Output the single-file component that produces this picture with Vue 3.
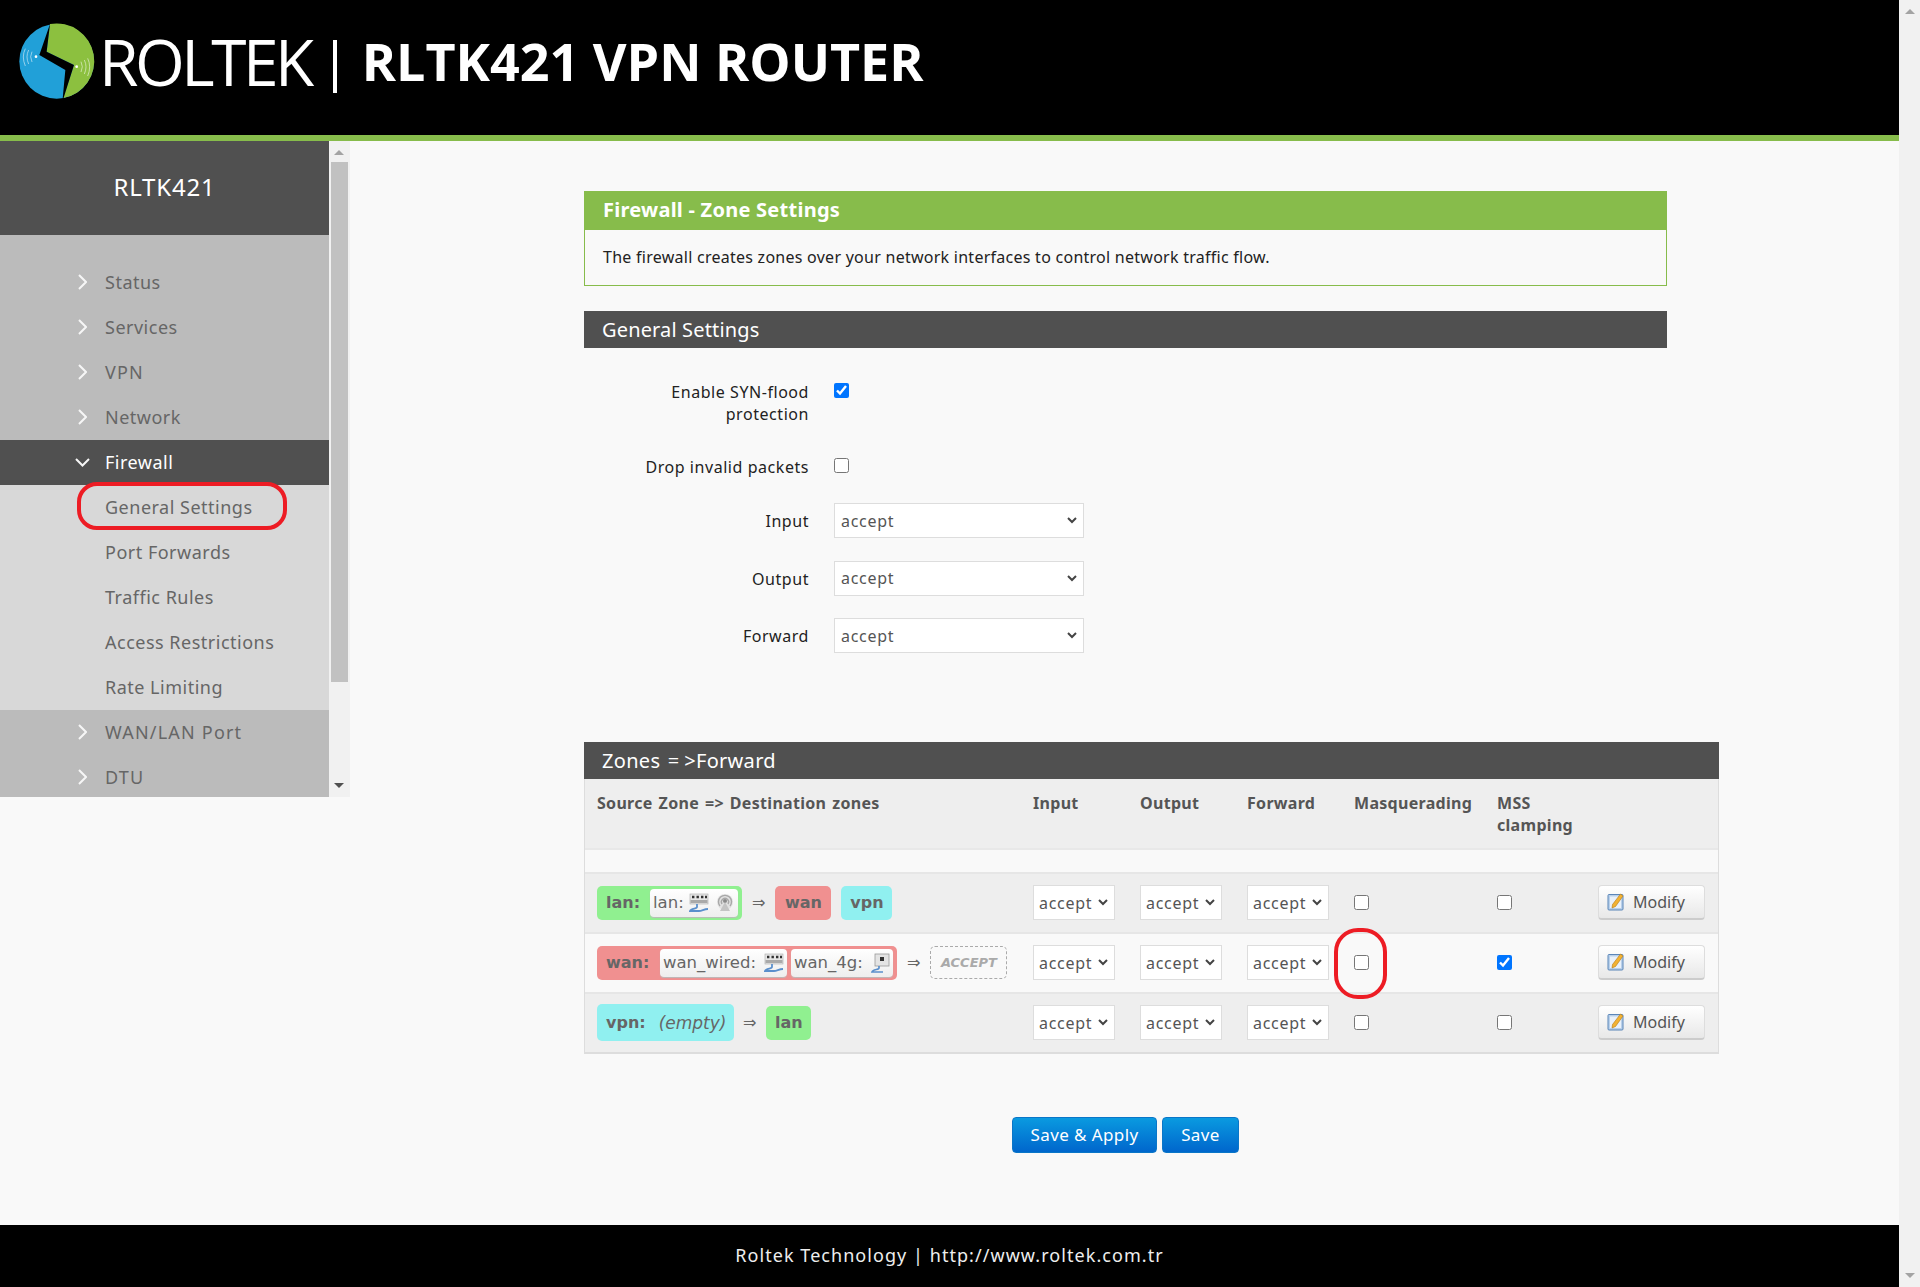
<script setup>
const top = ['Status', 'Services', 'VPN', 'Network']
const sub = ['General Settings', 'Port Forwards', 'Traffic Rules', 'Access Restrictions', 'Rate Limiting']
const bottom = ['WAN/LAN Port', 'DTU']
const selects = ['Input', 'Output', 'Forward']
const caps = ['VPN', 'WAN/LAN Port', 'DTU']
const rows = [
  { id: 'lan', cls: 'odd', mss: false },
  { id: 'wan', cls: 'even', mss: true },
  { id: 'vpn', cls: 'odd last', mss: false }
]
</script>

<template>
  <div class="root">
    <div class="page">
      <header class="head">
        <svg class="logo" viewBox="0 0 315 360" width="105" height="120">
          <circle cx="170" cy="184" r="112" fill="#21a0d8" />
          <path d="M150 72 A112 112 0 0 1 190 294 L222 195 L140 155 Z" fill="#8cc03f" />
          <path d="M150 72 L118 165 L196 210 L188 296 L190 296 L222 195 L140 155 Z" fill="#000" />
          <circle cx="108" cy="170" r="4" fill="#fff" />
          <circle cx="230" cy="200" r="4" fill="#fff" />
          <g fill="none" stroke="#cfe9f5" stroke-width="2">
            <path d="M96 155 Q88 170 96 186" />
            <path d="M86 150 Q76 170 86 192" />
            <path d="M76 146 Q64 170 76 198" />
          </g>
          <g fill="none" stroke="#e6f2d4" stroke-width="2">
            <path d="M243 185 Q251 200 243 216" />
            <path d="M253 180 Q263 200 253 222" />
            <path d="M263 175 Q275 200 263 228" />
          </g>
        </svg>
        <span class="brand">ROLTEK</span>
        <span class="bar"></span>
        <span class="product">RLTK421 VPN ROUTER</span>
      </header>
      <div class="body">
        <aside class="side">
          <nav class="menu">
            <div class="title">RLTK421</div>
            <ul class="list">
              <li v-for="m in top" :key="m" class="item" :class="{ caps: caps.includes(m) }">
                <svg class="chev" viewBox="0 0 9 16" width="9" height="16"><path d="M1 1l7 7-7 7" /></svg>{{ m }}
              </li>
              <li class="item active">
                <svg class="chev down" viewBox="0 0 15 9" width="15" height="9"><path d="M1 1l6.5 6.5L14 1" /></svg>Firewall
              </li>
              <li v-for="s in sub" :key="s" class="item subitem">{{ s }}</li>
              <li v-for="m in bottom" :key="m" class="item" :class="{ caps: caps.includes(m) }">
                <svg class="chev" viewBox="0 0 9 16" width="9" height="16"><path d="M1 1l7 7-7 7" /></svg>{{ m }}
              </li>
            </ul>
          </nav>
          <div class="sbar">
            <span class="arrow up"></span>
            <span class="thumb"></span>
            <span class="arrow dn"></span>
          </div>
        </aside>
        <main class="main">
          <section class="intro">
            <h2 class="green">Firewall - Zone Settings</h2>
            <p class="desc">The firewall creates zones over your network interfaces to control network traffic flow.</p>
          </section>
          <h3 class="dark general">General Settings</h3>
          <div class="form">
            <div class="frow r-syn">
              <label class="lab">Enable SYN-flood protection</label>
              <input type="checkbox" class="cb" checked />
            </div>
            <div class="frow r-drop">
              <label class="lab">Drop invalid packets</label>
              <input type="checkbox" class="cb" />
            </div>
            <div v-for="s in selects" :key="s" class="frow r-sel">
              <label class="lab">{{ s }}</label>
              <select class="sel wide"><option>accept</option></select>
            </div>
          </div>
          <div class="zones">
            <h3 class="dark zhead">Zones <span class="eq">=</span>&gt;Forward</h3>
            <div class="table">
              <div class="tr thead">
                <div class="th first">Source Zone =&gt; Destination zones</div>
                <div class="th">Input</div>
                <div class="th">Output</div>
                <div class="th">Forward</div>
                <div class="th">Masquerading</div>
                <div class="th">MSS clamping</div>
                <div></div>
              </div>
              <div class="spacer"></div>
              <div v-for="r in rows" :key="r.id" class="tr row" :class="r.cls">
                <div class="td first">
                  <template v-if="r.id === 'lan'">
                    <span class="zone z-lan"><b>lan:</b>
                      <span class="ifc w-lan">lan:
                        <svg class="eth" viewBox="0 0 20 20" width="20" height="20"><use href="#eth" /></svg>
                        <svg class="radio" viewBox="0 0 20 20" width="20" height="20">
                          <circle cx="10" cy="9" r="8" fill="#e2e2e2" />
                          <path d="M5 13a6.5 6.5 0 1 1 10 0M7 11a3.6 3.6 0 1 1 6 0" fill="none" stroke="#a8a8a8" stroke-width="1.4" />
                          <circle cx="10" cy="8" r="2" fill="#8a8a8a" />
                          <path d="M10 9l-5 9h10z" fill="#c4c4c4" />
                        </svg>
                      </span>
                    </span>
                    <span class="to">⇒</span>
                    <span class="dest d-wan">wan</span>
                    <span class="dest d-vpn">vpn</span>
                  </template>
                  <template v-else-if="r.id === 'wan'">
                    <span class="zone z-wan"><b>wan:</b>
                      <span class="ifc w-wired">wan_wired:
                        <svg class="eth" viewBox="0 0 20 20" width="20" height="20"><use href="#eth" /></svg>
                      </span>
                      <span class="ifc w-4g">wan_4g:
                        <svg class="eth" viewBox="0 0 20 20" width="20" height="20">
                          <rect x="5" y="1" width="14" height="12" fill="#e4e4e4" stroke="#999" stroke-width=".8" />
                          <rect x="10" y="4" width="4" height="4" fill="#333" />
                          <path d="M9 13v2c0 2-6 1-7 4h11" fill="none" stroke="#5a8fcc" stroke-width="1.7" />
                        </svg>
                      </span>
                    </span>
                    <span class="to">⇒</span>
                    <span class="dest d-accept">ACCEPT</span>
                  </template>
                  <template v-else>
                    <span class="zone z-vpn"><b>vpn:</b><em class="empty">(empty)</em></span>
                    <span class="to to-v">⇒</span>
                    <span class="dest d-lan">lan</span>
                  </template>
                </div>
                <div class="td"><select class="sel small"><option>accept</option></select></div>
                <div class="td"><select class="sel small"><option>accept</option></select></div>
                <div class="td"><select class="sel small"><option>accept</option></select></div>
                <div class="td"><input type="checkbox" class="cb flat" /></div>
                <div class="td"><input type="checkbox" class="cb flat" :checked="r.mss" /></div>
                <div class="td">
                  <button class="modify">
                    <svg viewBox="0 0 18 18" width="18" height="18">
                      <rect x="1" y="1.5" width="15" height="15.5" rx="1" fill="#b9d0ea" stroke="#5b86b8" />
                      <rect x="3" y="3.5" width="11" height="11.5" fill="#e9f1fa" />
                      <path d="M13.5 1l2.5 2-7.5 10.5-3.5 1.5.5-3.5z" fill="#f2b233" stroke="#b57a12" stroke-width=".6" />
                    </svg>
                    <span class="mtext">Modify</span>
                  </button>
                </div>
              </div>
            </div>
          </div>
          <div class="actions">
            <button class="blue apply">Save &amp; Apply</button>
            <button class="blue save">Save</button>
          </div>
        </main>
      </div>
      <footer class="foot">Roltek Technology | http://www.roltek.com.tr</footer>
    </div>
    <div class="pbar"><span class="arrow up"></span><span class="arrow dn"></span></div>
    <svg class="defs" width="0" height="0">
      <symbol id="eth" viewBox="0 0 20 20">
        <rect x="1" y="1" width="18" height="10" fill="#e6e6e6" stroke="#aaa" stroke-width=".6" />
        <path d="M3 4h2.4M7.5 4h2.4M12 4h2.4M16 4h2" stroke="#333" stroke-width="2.6" />
        <rect x="1.5" y="7" width="17" height="3" fill="#a9a9a9" />
        <path d="M8 11v3c0 2-6 1-7 4h9c3 0 5-2 9-2" fill="none" stroke="#5a8fcc" stroke-width="1.8" />
      </symbol>
    </svg>
    <span class="mark mark-a"></span>
    <span class="mark mark-b"></span>
  </div>
</template>

<style>
html, body { margin: 0; padding: 0; background: #f9f9f9; }
</style>

<style scoped>
.root { position: relative; display: flex; height: 1287px; width: 1920px; overflow: hidden; font-family: "Noto Sans", "Open Sans", sans-serif; color: #222; }
.page { width: 1899px; display: flex; flex-direction: column; background: #f9f9f9; }
.pbar { width: 21px; background: #f1f1f1; display: flex; flex-direction: column; justify-content: space-between; align-items: center; padding: 9px 0; box-sizing: border-box; }
.defs { position: absolute; }

.head { height: 135px; background: #000; border-bottom: 6px solid #87bc4b; display: flex; align-items: flex-start; flex: none; color: #fff; box-sizing: content-box; }
.logo { flex: none; }
.brand { font-family: "Open Sans", sans-serif; font-weight: 400; font-size: 64px; line-height: 64px; letter-spacing: -3.5px; margin: 30px 0 0 -6px; }
.bar { width: 4px; height: 53px; background: #fff; margin: 40px 0 0 22px; }
.product { font-family: "Open Sans", sans-serif; font-weight: 700; font-size: 52px; line-height: 52px; margin: 35px 0 0 25px; white-space: nowrap; }

.body { flex: 1; display: flex; min-height: 0; align-items: flex-start; }
.side { width: 350px; height: 656px; display: flex; flex: none; overflow: hidden; }
.menu { width: 329px; background: #bbb; }
.title { height: 94px; background: #505050; color: #fff; font-size: 24px; line-height: 92px; text-align: center; letter-spacing: .8px; }
.list { list-style: none; margin: 0; padding: 25px 0 0; }
.item { height: 45px; line-height: 45px; padding-left: 105px; position: relative; font-size: 18px; letter-spacing: .5px; color: #666; }
.caps { letter-spacing: 1.2px; }
.chev { position: absolute; left: 78px; top: 14px; fill: none; stroke: #f6f6f6; stroke-width: 2; }
.chev.down { left: 75px; top: 18px; }
.active { background: #505050; color: #fff; }
.subitem { background: #d8d8d8; }
.sbar { width: 21px; background: #f1f1f1; position: relative; }
.thumb { position: absolute; left: 2px; top: 21px; width: 17px; height: 520px; background: #c1c1c1; }
.arrow { display: block; width: 0; height: 0; border-left: 5px solid transparent; border-right: 5px solid transparent; }
.arrow.up { border-bottom: 5px solid #a3a3a3; }
.arrow.dn { border-top: 5px solid #a3a3a3; }
.sbar .arrow { position: absolute; left: 5px; }
.sbar .up { top: 9px; }
.sbar .dn { top: 642px; border-top-color: #505050; }

.main { flex: 1; padding: 50px 0 0 234px; min-width: 0; }
.intro { width: 1083px; height: 95px; border: 1px solid #87bc4b; box-sizing: border-box; }
.green { margin: -1px -1px 0; height: 39px; line-height: 37px; background: #87bc4b; color: #fff; font-size: 20px; font-weight: 700; padding-left: 19px; letter-spacing: .25px; }
.desc { margin: 0; padding-left: 18px; font-size: 16px; letter-spacing: .26px; line-height: 54px; color: #222; }
.dark { margin: 0; height: 37px; line-height: 37px; background: #505050; color: #fff; font-size: 20px; font-weight: 400; padding-left: 18px; letter-spacing: .15px; }
.zhead { letter-spacing: .3px; word-spacing: 2px; }
.eq { letter-spacing: 5px; }
.general { width: 1065px; margin-top: 25px; }
.form { padding-top: 33px; }
.frow { display: flex; align-items: flex-start; column-gap: 25px; }
.lab { width: 225px; box-sizing: border-box; padding-left: 30px; text-align: right; font-size: 16px; letter-spacing: .55px; line-height: 22px; flex: none; color: #222; }
.r-syn { height: 75px; }
.r-drop { height: 47px; }
.r-sel { height: 57.5px; align-items: flex-start; }
.r-sel .lab { line-height: 35px; padding-top: 1px; }
.cb { width: 15px; height: 15px; margin: 2px 0 0; flex: none; }
.cb.flat { margin: 0; }
.sel { appearance: none; -webkit-appearance: none; background-color: #fff; background-image: url("data:image/svg+xml,%3Csvg xmlns='http://www.w3.org/2000/svg' width='10' height='7'%3E%3Cpath d='M1 1l4 4 4-4' fill='none' stroke='%23444' stroke-width='2'/%3E%3C/svg%3E"); background-repeat: no-repeat; background-position: right 6px center; border: 1px solid #ddd; color: #555; font-family: inherit; font-size: 16px; letter-spacing: .7px; box-sizing: border-box; height: 35px; border-radius: 0; outline: none; padding: 0 0 0 6px; }
.wide { width: 250px; }
.small { width: 82px; padding-left: 5px; }

.zones { margin-top: 66px; width: 1135px; }
.table { border: 1px solid #ddd; border-top: 0; border-bottom: 2px solid #ddd; box-sizing: border-box; }
.tr { display: grid; grid-template-columns: 448px 107px 107px 107px 143px 101px 120px; }
.thead { height: 71px; background: #eee; border-bottom: 2px solid #e8e8e8; box-sizing: border-box; }
.th { font-size: 16px; font-weight: 700; color: #555; line-height: 22px; padding-top: 13px; letter-spacing: .3px; word-spacing: 1.5px; }
.th.first, .td.first { padding-left: 12px; }
.spacer { height: 22px; background: #f9f9f9; }
.row { height: 60px; box-sizing: border-box; border-top: 2px solid #e6e6e6; align-items: center; }
.odd { background: #eee; }
.even { background: #f9f9f9; }
.td { display: flex; align-items: center; }
.td.first { font-family: "DejaVu Sans", sans-serif; font-size: 16px; color: #666; }
.zone { display: inline-flex; align-items: center; height: 34px; border-radius: 5px; box-sizing: border-box; flex: none; padding-left: 9px; }
.z-lan { background: #90f090; width: 145px; }
.z-lan b { width: 44px; flex: none; }
.z-wan { background: #f09090; width: 300px; }
.z-wan b { width: 54px; flex: none; }
.z-vpn { background: #90f0f0; width: 137px; height: 37px; }
.ifc { display: inline-flex; align-items: center; justify-content: space-between; height: 28px; background: linear-gradient(#fff, #eee); border-radius: 4px; padding: 0 3px; white-space: nowrap; box-shadow: 0 1px 1px #bbb; box-sizing: border-box; font-size: 16.5px; flex: none; }
.w-lan { width: 88px; }
.w-wired { width: 127px; }
.w-4g { width: 102px; margin-left: 4px; }
.eth, .radio { flex: none; }
.empty { margin-left: 13px; font-size: 17px; }
.to { margin: 0 10px; color: #666; font-size: 16px; flex: none; }
.to-v { margin: 0 10px 0 9px; }
.dest { display: inline-flex; align-items: center; justify-content: center; height: 34px; border-radius: 5px; font-weight: 700; margin-right: 10px; flex: none; }
.d-wan { background: #f09090; width: 56px; }
.d-vpn { background: #90f0f0; width: 51px; }
.d-lan { background: #90f090; width: 45px; }
.d-accept { width: 77px; height: 33px; border: 1px dashed #aaa; border-radius: 5px; box-sizing: border-box; color: #aaa; font-size: 13px; font-style: italic; }
.modify { width: 107px; height: 35px; display: inline-flex; align-items: center; padding: 0 0 0 8px; background: linear-gradient(#fff, #e8e8e8); border: 1px solid #ddd; border-bottom: 2px solid #ccc; border-radius: 4px; color: #555; font-family: inherit; font-size: 16px; box-sizing: border-box; }
.mtext { margin-left: 8px; }

.actions { display: flex; gap: 5px; margin: 63px 0 0 428px; }
.blue { height: 36px; border: 1px solid #0a76c8; border-radius: 4px; background: linear-gradient(#0a9ae0, #0066cc); color: #fff; font-family: inherit; font-size: 17px; letter-spacing: .4px; padding: 0; }
.apply { width: 145px; }
.save { width: 77px; }

.foot { height: 62px; flex: none; background: #000; color: #eee; font-size: 18px; line-height: 60px; text-align: center; letter-spacing: 1.05px; }

.mark { position: absolute; border: 4px solid #ed1c24; box-sizing: border-box; }
.mark-a { left: 77px; top: 482px; width: 210px; height: 48px; border-radius: 20px; }
.mark-b { left: 1334px; top: 928px; width: 53px; height: 71px; border-radius: 24px; }
</style>
